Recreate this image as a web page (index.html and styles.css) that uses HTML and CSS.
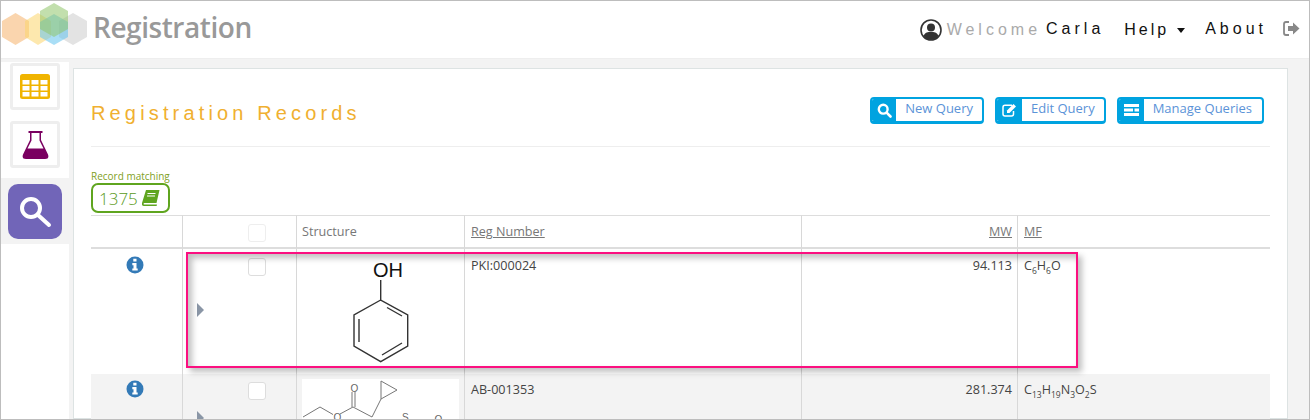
FILE: index.html
```html
<!DOCTYPE html>
<html lang="en">
<head>
    <meta charset="UTF-8">
    <title>Registration</title>
    <link rel="stylesheet" href="styles.css">
</head>
<body>

<div class="app">
    <header class="topbar">
        <div class="brand">
            <svg class="brand-logo" width="88" height="46" viewBox="0 0 88 46">
                <polygon points="15.5,13 29,21 29,37 15.5,45 2,37 2,21" fill="#f6b26b" fill-opacity="0.55"/>
                <polygon points="38,13 51,21 51,37 38,45 25,37 25,21" fill="#fbd56b" fill-opacity="0.55"/>
                <polygon points="73,13 87,21 87,37 73,45 59,37 59,21" fill="#c8c8c8" fill-opacity="0.5"/>
                <polygon points="54,14 68,22 68,37 54,45 40,37 40,22" fill="#63c3ee" fill-opacity="0.55"/>
                <polygon points="54,3 68,11 68,29 54,37 40,29 40,11" fill="#8fc46a" fill-opacity="0.55"/>
            </svg>
            <span class="brand-name">Registration</span>
        </div>
        <nav class="topnav">
            <svg class="user-icon" width="22" height="22" viewBox="0 0 22 22">
                <circle cx="11" cy="11" r="10" fill="#fff" stroke="#333" stroke-width="1.6"/>
                <circle cx="11" cy="8.5" r="4" fill="#333"/>
                <path d="M3.5 17 C5 13 8 13 11 13 C14 13 17 13 18.5 17 C16.5 19.8 14 21 11 21 C8 21 5.5 19.8 3.5 17 Z" fill="#333"/>
            </svg>
            <span class="welcome">Welcome</span>
            <span class="user-name">Carla</span>
            <a class="nav-link nav-help" href="#">Help<i class="caret"></i></a>
            <a class="nav-link nav-about" href="#">About</a>
            <svg class="logout-icon" width="17" height="15" viewBox="0 0 17 15">
                <path d="M6 1 H3 Q1 1 1 3 V12 Q1 14 3 14 H6" fill="none" stroke="#888" stroke-width="1.8"/>
                <path d="M5 5 H10 V1.5 L16.5 7.5 L10 13.5 V10 H5 Z" fill="#888"/>
            </svg>
        </nav>
    </header>

    <div class="body-row">
        <div class="sidebar">
            <div class="side-top">
                <a class="side-card" href="#">
                    <svg width="30" height="25" viewBox="0 0 30 25">
                        <rect width="30" height="25" rx="2.5" fill="#f0b400"/>
                        <g fill="#fff">
                            <rect x="2.5" y="6" width="7" height="4.5"/><rect x="11.5" y="6" width="7" height="4.5"/><rect x="20.5" y="6" width="7" height="4.5"/>
                            <rect x="2.5" y="12" width="7" height="4.5"/><rect x="11.5" y="12" width="7" height="4.5"/><rect x="20.5" y="12" width="7" height="4.5"/>
                            <rect x="2.5" y="18" width="7" height="4.5"/><rect x="11.5" y="18" width="7" height="4.5"/><rect x="20.5" y="18" width="7" height="4.5"/>
                        </g>
                    </svg>
                </a>
                <a class="side-card" href="#">
                    <svg width="27" height="28" viewBox="0 0 27 28">
                        <path d="M6.5 0 H20.5 V2 H19 V9 L26 23.5 Q27.5 28 23 28 H4 Q-0.5 28 1 23.5 L8 9 V2 H6.5 Z" fill="#7a0060"/>
                        <path d="M9.5 2 H17.5 V9.5 L21.5 17.5 H5.5 L9.5 9.5 Z" fill="#fff"/>
                    </svg>
                </a>
            </div>
            <div class="side-active">
                <a class="side-search" href="#">
                    <svg width="54" height="55" viewBox="0 0 54 55">
                        <circle cx="23" cy="24" r="9" fill="none" stroke="#fff" stroke-width="4"/>
                        <path d="M30 31 L41 41" stroke="#fff" stroke-width="4" stroke-linecap="round"/>
                    </svg>
                </a>
            </div>
            <div class="side-rest"></div>
        </div>

        <main class="panel">
            <div class="panel-head">
                <h1 class="panel-title">Registration Records</h1>
                <div class="panel-actions">
                    <a class="btn btn-new" href="#">
                        <span class="btn-icon">
                            <svg width="15" height="15" viewBox="0 0 15 15">
                                <circle cx="6.2" cy="6.2" r="4.4" fill="none" stroke="#fff" stroke-width="2.4"/>
                                <path d="M9.6 9.6 L13.5 13.5" stroke="#fff" stroke-width="2.6" stroke-linecap="round"/>
                            </svg>
                        </span>
                        <span class="btn-text">New Query</span>
                    </a>
                    <a class="btn" href="#">
                        <span class="btn-icon">
                            <svg width="15" height="14" viewBox="0 0 15 14">
                                <path d="M10 2.2 H3 Q1 2.2 1 4.2 V11 Q1 13 3 13 H9.5 Q11.5 13 11.5 11 V8" fill="none" stroke="#fff" stroke-width="1.5"/>
                                <path d="M5 7.5 L11.5 1 L14 3.5 L7.5 10 H5 Z" fill="#fff"/>
                            </svg>
                        </span>
                        <span class="btn-text">Edit Query</span>
                    </a>
                    <a class="btn btn-manage" href="#">
                        <span class="btn-icon">
                            <svg width="15" height="12" viewBox="0 0 15 12">
                                <path d="M0 0 H15 V3 H0 Z M0 4.5 H9 V7.5 H0 Z M10.5 4.5 H15 V7.5 H10.5 Z M0 9 H15 V12 H0 Z" fill="#fff"/>
                            </svg>
                        </span>
                        <span class="btn-text">Manage Queries</span>
                    </a>
                </div>
            </div>

            <div class="record-count">
                <div class="record-label">Record matching</div>
                <div class="record-badge">
                    <span>1375</span>
                    <svg width="18" height="16" viewBox="0 0 18 16">
                        <path d="M4 0 H17.5 L14.5 13 H2.5 Q1.5 13 1.6 14 Q1.7 14.6 2.5 14.6 H15 L14.6 16 H2 Q-0.5 16 0 13 Z" fill="#5fa51f"/>
                        <path d="M5.5 3.5 H13.5 M5 6 H13" stroke="#fff" stroke-width="1"/>
                    </svg>
                </div>
            </div>

            <table class="records">
                <colgroup>
                    <col class="col-info">
                    <col class="col-check">
                    <col class="col-structure">
                    <col class="col-reg">
                    <col class="col-mw">
                    <col>
                </colgroup>
                <thead>
                    <tr>
                        <th></th>
                        <th class="cell-check"><span class="checkbox checkbox-head"></span></th>
                        <th class="head-structure">Structure</th>
                        <th><a href="#">Reg Number</a></th>
                        <th class="num"><a href="#">MW</a></th>
                        <th><a href="#">MF</a></th>
                    </tr>
                </thead>
                <tbody>
                    <tr class="row-first">
                        <td class="cell-info">
                            <svg class="info-icon" width="18" height="18" viewBox="0 0 18 18">
                                <circle cx="9" cy="9" r="8.5" fill="#337ab7"/>
                                <path d="M7.3 2.8 H10.5 V5.6 H7.3 Z M6.3 7 H10.5 V12.4 H11.7 V14.6 H6.3 V12.4 H7.5 V9.2 H6.3 Z" fill="#fff"/>
                            </svg>
                        </td>
                        <td class="cell-check"><span class="checkbox"></span><i class="row-arrow"></i></td>
                        <td class="cell-structure">
                            <svg class="mol" width="167" height="125" viewBox="297 249 167 125">
                                <text x="373" y="277" class="mol-oh">OH</text>
                                <g fill="none" stroke="#333" stroke-width="1.4">
                                    <path d="M380.7 280 V300 L407.7 315 V346 L380.7 361.7 L354 346 V315 L380.7 300"/>
                                    <path d="M387 307.5 L402 316 M359 319 V342 M382 355 L402 343"/>
                                </g>
                            </svg>
                        </td>
                        <td>PKI:000024</td>
                        <td class="num">94.113</td>
                        <td>C<sub>6</sub>H<sub>6</sub>O</td>
                    </tr>
                    <tr class="row-alt">
                        <td class="cell-info">
                            <svg class="info-icon" width="18" height="18" viewBox="0 0 18 18">
                                <circle cx="9" cy="9" r="8.5" fill="#337ab7"/>
                                <path d="M7.3 2.8 H10.5 V5.6 H7.3 Z M6.3 7 H10.5 V12.4 H11.7 V14.6 H6.3 V12.4 H7.5 V9.2 H6.3 Z" fill="#fff"/>
                            </svg>
                        </td>
                        <td class="cell-check"><span class="checkbox"></span><i class="row-arrow"></i></td>
                        <td class="cell-structure">
                            <svg class="mol mol-boxed" width="157" height="60" viewBox="302 379 157 60">
                                <g fill="none" stroke="#777" stroke-width="1">
                                    <path d="M303 417 L320 407 L333 414.5 M340 414 L353 407 L372 417 M381 381 L397 390 L381 399 Z M381 399 L372 417"/>
                                    <path d="M352 407 V392 M355 407 V392"/>
                                </g>
                                <g class="mol-atom">
                                    <text x="350.5" y="391.5">O</text>
                                    <text x="333.5" y="421">O</text>
                                    <text x="402" y="421">S</text>
                                    <text x="434.5" y="423">O</text>
                                </g>
                            </svg>
                        </td>
                        <td>AB-001353</td>
                        <td class="num">281.374</td>
                        <td>C<sub>13</sub>H<sub>19</sub>N<sub>3</sub>O<sub>2</sub>S</td>
                    </tr>
                </tbody>
            </table>
        </main>
    </div>

    <div class="highlight"></div>
</div>

</body>
</html>
```

FILE: styles.css
```css
* {
    box-sizing: border-box;
}

html, body {
    margin: 0;
    padding: 0;
    height: 420px;
    overflow: hidden;
}

body {
    font-family: "Open Sans", Arial, sans-serif;
    background-color: #ffffff;
}

a {
    text-decoration: none;
}

.app {
    position: relative;
    height: 420px;
    border: 1px solid #bdbdbd;
    display: flex;
    flex-direction: column;
    overflow: hidden;
}

/* top bar */
.topbar {
    height: 58px;
    flex: none;
    display: flex;
    justify-content: space-between;
    background-color: #ffffff;
    border-bottom: 1px solid #eeeeee;
}

.brand {
    display: flex;
    align-items: flex-start;
    margin-left: -1px;
}

.brand-logo {
    flex: none;
    margin-top: -1px;
}

.brand-name {
    margin: 5px 0 0 5px;
    font-size: 28px;
    line-height: 42px;
    font-weight: 600;
    letter-spacing: -0.45px;
    color: #999999;
}

.topnav {
    display: flex;
    align-items: center;
    padding-right: 9px;
    font-family: "Liberation Sans", Arial, sans-serif;
    font-size: 16px;
    letter-spacing: 4px;
    color: #111111;
}

.user-icon {
    margin-right: 5px;
}

.welcome {
    color: #aaaaaa;
    margin-right: 5px;
}

.user-name {
    margin-right: 20px;
    margin-top: -2px;
}

.nav-link {
    color: #111111;
}

.nav-help {
    margin-right: 20px;
    display: flex;
    align-items: center;
    letter-spacing: 3px;
}

.caret {
    width: 0;
    height: 0;
    margin: 2px 0 0 8px;
    border-left: 4.5px solid transparent;
    border-right: 4.5px solid transparent;
    border-top: 5px solid #111111;
}

.nav-about {
    margin-right: 16px;
    margin-top: -2px;
}

.logout-icon {
    margin-top: -2px;
}

/* main area */
.body-row {
    flex: 1;
    display: flex;
    min-height: 0;
    background-color: #f3f3f3;
}

.sidebar {
    width: 68px;
    flex: none;
    display: flex;
    flex-direction: column;
    padding-top: 3px;
}

.side-top {
    height: 116px;
    padding: 1px 0 0 9px;
    background-color: #ffffff;
}

.side-card {
    display: flex;
    align-items: center;
    justify-content: center;
    width: 50px;
    height: 47px;
    margin-bottom: 11px;
    border: 3px solid #eeeeee;
    border-radius: 3px;
}

.side-active {
    height: 66px;
    padding: 6px 0 0 7px;
}

.side-search {
    display: block;
    width: 54px;
    height: 55px;
    border-radius: 10px;
    background-color: #7165b8;
}

.side-search svg {
    display: block;
}

.side-rest {
    flex: 1;
    background-color: #ffffff;
}

.panel {
    width: 1215px;
    margin: 9px 0 0 4px;
    padding: 0 17px;
    background-color: #ffffff;
    border: 1px solid #dde3e3;
}

.panel-head {
    height: 78px;
    padding: 28px 6px 0 0;
    display: flex;
    justify-content: space-between;
    border-bottom: 1px solid #eeeeee;
}

.panel-title {
    margin: 5px 0 0;
    font-family: "Liberation Sans", Arial, sans-serif;
    font-size: 20px;
    line-height: 22px;
    font-weight: normal;
    letter-spacing: 4.15px;
    color: #f0b030;
}

.panel-actions {
    display: flex;
    gap: 11px;
}

.btn {
    display: flex;
    height: 27px;
    border: 2px solid #00a3e0;
    border-bottom-width: 3px;
    border-radius: 4px;
    overflow: hidden;
}

.btn-icon {
    width: 25px;
    display: flex;
    align-items: center;
    justify-content: center;
    background-color: #00a3e0;
}

.btn-text {
    padding: 0 9px;
    font-size: 13px;
    line-height: 19px;
    color: #5b93d8;
}

.btn-new .btn-icon {
    width: 24px;
}

.btn-manage .btn-text {
    padding-right: 10px;
}

.record-count {
    padding-top: 23px;
}

.record-label {
    font-size: 10px;
    line-height: 13px;
    color: #7f9f1f;
}

.record-badge {
    display: flex;
    align-items: center;
    gap: 4px;
    width: 79px;
    height: 30px;
    margin-bottom: 2px;
    padding-left: 6px;
    border: 2px solid #5fa51f;
    border-radius: 7px;
    font-size: 17px;
    font-weight: 300;
    color: #5a9a1a;
}

/* records table */
.records {
    width: 1179px;
    table-layout: fixed;
    border-collapse: separate;
    border-spacing: 0;
    font-size: 12.6px;
    color: #444444;
}

.col-info { width: 92px; }
.col-check { width: 114px; }
.col-structure { width: 168px; }
.col-reg { width: 337px; }
.col-mw { width: 216px; }

.records th,
.records td {
    padding: 8px 5px 0 6px;
    text-align: left;
    vertical-align: top;
    border-right: 1px solid #d8d8d8;
}

.records th:last-child,
.records td:last-child {
    border-right: none;
}

.records th {
    height: 34px;
    padding-top: 7px;
    font-weight: normal;
    color: #777777;
    border-top: 1px solid #dddddd;
    border-bottom: 2px solid #dddddd;
}

.records th.head-structure {
    padding-left: 5px;
}

.records th a {
    color: #777777;
    text-decoration: underline;
}

.records .num {
    text-align: right;
}

.records sub {
    font-size: 8.5px;
    line-height: 0;
}

.row-first td {
    height: 125px;
}

.row-alt td {
    height: 60px;
    padding-top: 7px;
    background-color: #f3f3f3;
}

.records .cell-info {
    padding: 7px 3px 0 0;
    text-align: center;
}

.records .row-alt .cell-info {
    padding-top: 6px;
}

.info-icon {
    display: inline-block;
}

.records .cell-check {
    position: relative;
    padding: 9px 0 0 65px;
}

.records .row-alt .cell-check {
    padding-top: 8px;
}

.records th.cell-check {
    padding-top: 8px;
}

.checkbox {
    display: block;
    width: 18px;
    height: 18px;
    background-color: #ffffff;
    border: 1px solid #dddddd;
    border-radius: 3px;
}

.checkbox-head {
    border-color: #eeeeee;
}

/* small marker beside a row, sits over the cell */
.row-arrow {
    position: absolute;
    left: 14px;
    top: 54px;
    width: 0;
    height: 0;
    border-top: 7px solid transparent;
    border-bottom: 7px solid transparent;
    border-left: 7px solid #8a96a6;
}

.row-alt .row-arrow {
    top: 37px;
}

.records .cell-structure,
.records .row-alt .cell-structure {
    padding: 0;
}

.mol {
    display: block;
}

.mol-boxed {
    margin: 5px 0 0 5px;
    background-color: #ffffff;
}

.mol-oh {
    font-family: "Liberation Sans", Arial, sans-serif;
    font-size: 20px;
    fill: #111111;
}

.mol-atom text {
    font-family: "Liberation Sans", Arial, sans-serif;
    font-size: 10px;
    fill: #666666;
}

/* annotation drawn over the first row */
.highlight {
    position: absolute;
    left: 185px;
    top: 251px;
    width: 892px;
    height: 116px;
    border: 2px solid #fb0f80;
    box-shadow: 4px 4px 6px rgba(0, 0, 0, 0.25), inset 4px 4px 6px rgba(0, 0, 0, 0.25);
    pointer-events: none;
}
```
